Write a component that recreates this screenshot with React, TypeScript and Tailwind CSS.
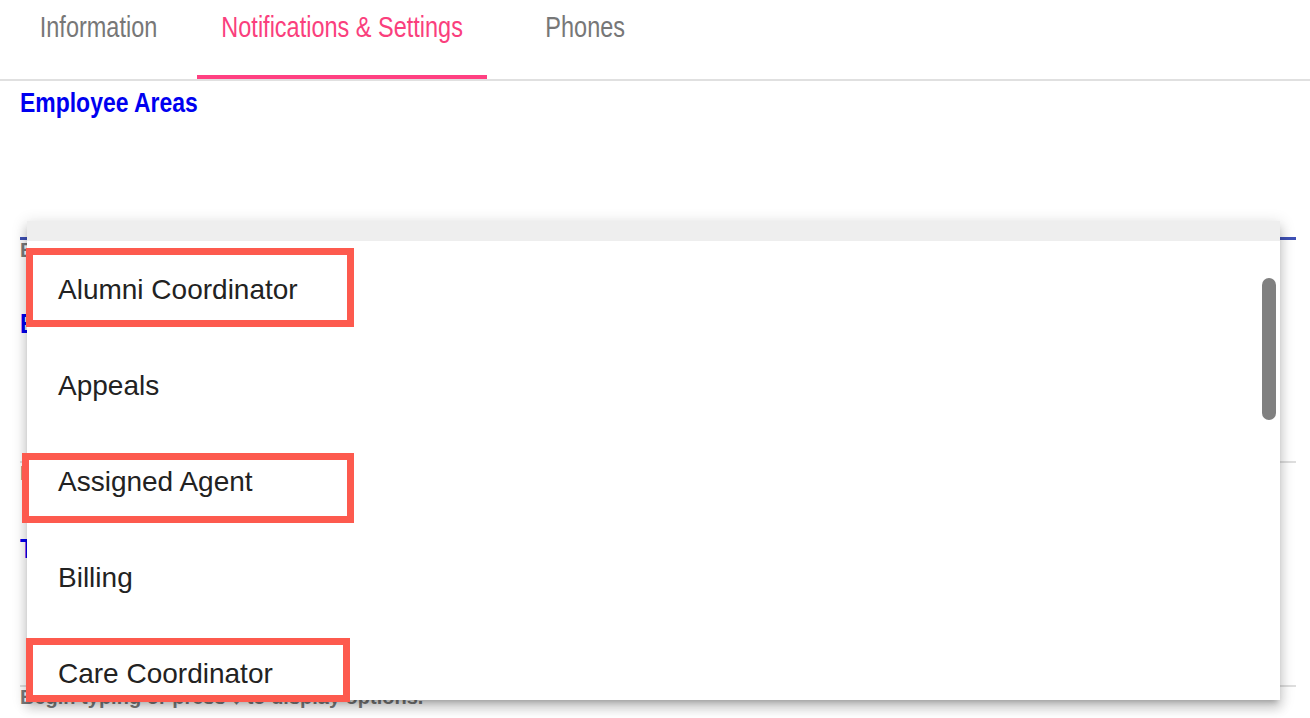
import React from "react";

const sans = { fontFamily: "'Liberation Sans', Arial, Helvetica, sans-serif" };

function Tab({ label, active, width }: { label: string; active?: boolean; width: string }) {
  return (
    <div
      className={`${width} h-[79px] flex justify-center pt-[13px] text-[29px] leading-none whitespace-nowrap ${
        active ? "text-[#fa3f7d] border-b-4 border-[#ff4081]" : "text-[#777777]"
      }`}
      style={sans}
    >
      <span className="inline-block scale-x-[0.81] origin-center">{label}</span>
    </div>
  );
}

function Section({
  title,
  inputH,
  focused,
  gapBefore,
}: {
  title: string;
  inputH: string;
  focused?: boolean;
  gapBefore: string;
}) {
  return (
    <div className={gapBefore}>
      <div
        className="text-[27px] leading-none font-bold text-[#0000f0] h-[27px] whitespace-nowrap"
        style={sans}
      >
        <span className="inline-block scale-x-[0.85] origin-left">{title}</span>
      </div>
      <div
        className={`${inputH} ${
          focused ? "border-b-[3px] border-[#3f51b5]" : "border-b-2 border-[#dedede]"
        }`}
      />
      <div className="h-5 text-[20px] leading-5 font-bold text-[#7a7a7a] whitespace-nowrap" style={sans}>
        Begin typing or press ↓ to display options.
      </div>
    </div>
  );
}

const items = ["Alumni Coordinator", "Appeals", "Assigned Agent", "Billing", "Care Coordinator", "Case Manager"];

function RedBox({ cls }: { cls: string }) {
  return <div className={`absolute border-[7px] border-[#fd5a4e] pointer-events-none ${cls}`} />;
}

export default function App() {
  return (
    <div className="relative w-[1310px] h-[718px] overflow-hidden bg-white">
      <div className="flex h-[81px] border-b-2 border-[#e0e0e0]">
        <Tab label="Information" width="w-[197px]" />
        <Tab label="Notifications & Settings" width="w-[290px]" active />
        <Tab label="Phones" width="w-[197px]" />
      </div>

      <div className="pl-5 pr-[14px] pt-[9px]">
        <Section title="Employee Areas" inputH="h-[123px]" focused gapBefore="" />
        <Section title="Email Notifications" inputH="h-[125px]" gapBefore="mt-[51px]" />
        <Section title="Text Notifications" inputH="h-[124px]" gapBefore="mt-[53px]" />
      </div>

      {/* dropdown menu overlay */}
      <div className="absolute left-[27px] top-[221px] w-[1253px] h-[479px] overflow-hidden bg-white shadow-[0_5px_5px_-3px_rgba(0,0,0,0.2),0_8px_10px_1px_rgba(0,0,0,0.14),0_3px_14px_2px_rgba(0,0,0,0.12)]">
        <div className="h-5 bg-[#eeeeee]" />
        {items.map((it) => (
          <div
            key={it}
            className="h-[96px] flex items-center pl-[31px] text-[28px] text-[#222222] pt-px"
            style={sans}
          >
            {it}
          </div>
        ))}
        <div className="absolute left-[1235px] top-[57px] w-[14px] h-[142px] rounded-full bg-[#808080]" />
      </div>

      {/* annotation boxes */}
      <RedBox cls="left-[26px] top-[248px] w-[328px] h-[79px]" />
      <RedBox cls="left-[22px] top-[453px] w-[332px] h-[70px]" />
      <RedBox cls="left-[26px] top-[638px] w-[324px] h-[64px]" />
    </div>
  );
}
